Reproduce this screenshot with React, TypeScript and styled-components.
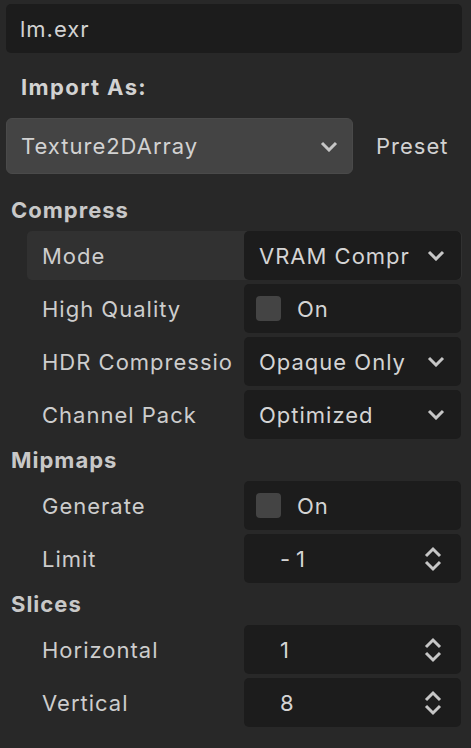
import React from "react";
import styled, { createGlobalStyle } from "styled-components";

const GlobalStyle = createGlobalStyle`
  html, body {
    margin: 0;
    padding: 0;
    background-color: #282828;
  }
  body {
    font-family: Inter, "Noto Sans", sans-serif;
    font-size: 22px;
    letter-spacing: 1px;
    color: #cfcfcf;
  }
`;

type Field =
  | { kind: "select"; value: string }
  | { kind: "check"; value: string }
  | { kind: "number"; value: string };

interface Prop {
  label: string;
  field: Field;
  hovered?: boolean;
}

// labels and values as the narrow dock shows them (clipped by the editor)
const sections: { title: string; props: Prop[] }[] = [
  {
    title: "Compress",
    props: [
      { label: "Mode", field: { kind: "select", value: "VRAM Compr" }, hovered: true },
      { label: "High Quality", field: { kind: "check", value: "On" } },
      { label: "HDR Compressio", field: { kind: "select", value: "Opaque Only" } },
      { label: "Channel Pack", field: { kind: "select", value: "Optimized" } },
    ],
  },
  {
    title: "Mipmaps",
    props: [
      { label: "Generate", field: { kind: "check", value: "On" } },
      { label: "Limit", field: { kind: "number", value: "-1" } },
    ],
  },
  {
    title: "Slices",
    props: [
      { label: "Horizontal", field: { kind: "number", value: "1" } },
      { label: "Vertical", field: { kind: "number", value: "8" } },
    ],
  },
];

const Dock = styled.div`
  width: 471px;
  height: 748px;
  box-sizing: border-box;
  padding: 4px 9px 0 6px;
  overflow: hidden;
`;

const FileName = styled.div`
  height: 49px;
  background-color: #1c1c1c;
  border-radius: 5px;
  display: flex;
  align-items: center;
  padding-left: 14px;
  color: #d2d2d2;
`;

const ImportLabel = styled.div`
  font-weight: 700;
  letter-spacing: 1.4px;
  line-height: 26px;
  margin: 21px 0 18px 15px;
  color: #d2d2d2;
`;

const ImportRow = styled.div`
  display: flex;
  align-items: center;
`;

const ImportSelect = styled.div`
  width: 347px;
  height: 56px;
  box-sizing: border-box;
  background-color: #444444;
  border: 1px solid #4a4a4a;
  border-radius: 6px;
  display: flex;
  align-items: center;
  justify-content: space-between;
  padding: 0 14px 0 14px;
  color: #d2d2d2;
`;

const PresetButton = styled.div`
  margin-left: 23px;
  color: #d2d2d2;
`;

const Section = styled.div<{ $first?: boolean }>`
  padding-left: 5px;
  margin-top: ${({ $first }) => ($first ? "23px" : "8px")};
`;

const SectionTitle = styled.div`
  font-weight: 700;
  line-height: 26px;
  color: #c8c8c8;
  margin-bottom: 8px;
`;

const Rows = styled.div`
  display: flex;
  flex-direction: column;
  gap: 4px;
  padding-left: 16px;
`;

const Row = styled.div<{ $hovered?: boolean }>`
  display: grid;
  grid-template-columns: 217px 217px;
  height: 49px;
  border-radius: 5px;
  background-color: ${({ $hovered }) => ($hovered ? "#313131" : "transparent")};
`;

const Label = styled.div`
  display: flex;
  align-items: center;
  padding-left: 15px;
  white-space: nowrap;
  overflow: hidden;
  color: #cdcdcd;
`;

const FieldBox = styled.div<{ $spin?: boolean }>`
  background-color: #1c1c1c;
  border-radius: 5px;
  display: flex;
  align-items: center;
  padding: 0 ${({ $spin }) => ($spin ? "19px" : "16px")} 0 15px;
  min-width: 0;
  color: #d4d4d4;
`;

const FieldText = styled.span`
  flex: 1;
  white-space: nowrap;
  overflow: hidden;
  min-width: 0;
`;

const CheckBox = styled.span`
  width: 25px;
  height: 25px;
  border-radius: 4px;
  background-color: #444444;
  margin-left: -3px;
  margin-right: 16px;
  flex-shrink: 0;
`;

const NumberText = styled.span`
  flex: 1;
  padding-left: 21px;
  letter-spacing: 6px;
`;

const Chevron = () => (
  <svg width="18" height="11" viewBox="0 0 18 11" style={{ flexShrink: 0, marginLeft: 12 }}>
    <polyline points="2,2 9,9 16,2" fill="none" stroke="#c6c6c6" strokeWidth="3" />
  </svg>
);

const UpDown = () => (
  <svg width="18" height="26" viewBox="0 0 18 26" style={{ flexShrink: 0 }}>
    <polyline points="2,10 9,3 16,10" fill="none" stroke="#c6c6c6" strokeWidth="3" />
    <polyline points="2,16 9,23 16,16" fill="none" stroke="#c6c6c6" strokeWidth="3" />
  </svg>
);

const renderField = (field: Field) => {
  if (field.kind === "select")
    return (
      <FieldBox>
        <FieldText>{field.value}</FieldText>
        <Chevron />
      </FieldBox>
    );
  if (field.kind === "check")
    return (
      <FieldBox>
        <CheckBox />
        <FieldText>{field.value}</FieldText>
      </FieldBox>
    );
  return (
    <FieldBox $spin>
      <NumberText>{field.value}</NumberText>
      <UpDown />
    </FieldBox>
  );
};

const App: React.FC = () => {
  return (
    <Dock>
      <GlobalStyle />
      <FileName>lm.exr</FileName>
      <ImportLabel>Import As:</ImportLabel>
      <ImportRow>
        <ImportSelect>
          <span>Texture2DArray</span>
          <Chevron />
        </ImportSelect>
        <PresetButton>Preset</PresetButton>
      </ImportRow>
      {sections.map((section, index) => (
        <Section key={section.title} $first={index === 0}>
          <SectionTitle>{section.title}</SectionTitle>
          <Rows>
            {section.props.map((prop) => (
              <Row key={prop.label} $hovered={prop.hovered}>
                <Label>{prop.label}</Label>
                {renderField(prop.field)}
              </Row>
            ))}
          </Rows>
        </Section>
      ))}
    </Dock>
  );
};

export default App;
